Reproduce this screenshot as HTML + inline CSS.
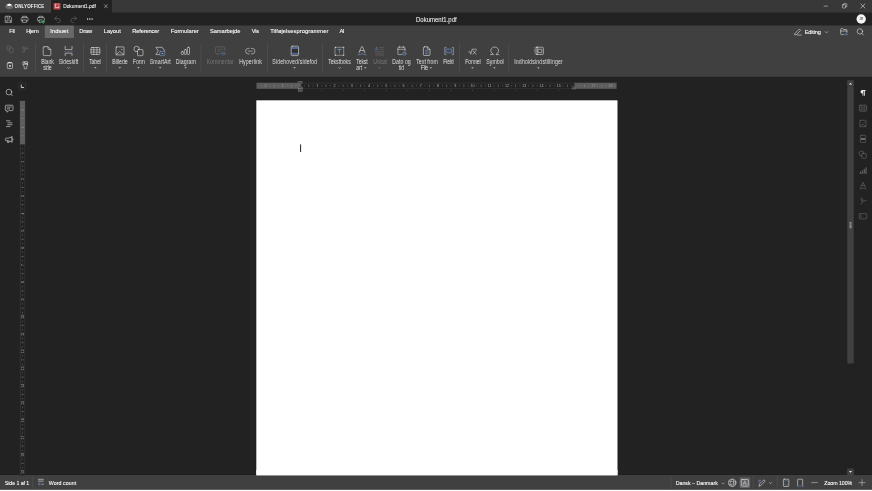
<!DOCTYPE html>
<html><head><meta charset="utf-8"><title>Dokument1.pdf - ONLYOFFICE</title>
<style>
html,body{margin:0;padding:0;width:872px;height:491px;overflow:hidden;background:#222222;}
#w{position:absolute;left:0;top:0;width:8720px;height:4910px;transform:scale(0.1);transform-origin:0 0;overflow:hidden;background:#222222;font-family:"Liberation Sans",sans-serif;}
#w div{position:absolute;}
#w .t{position:absolute;line-height:1;white-space:nowrap;transform-origin:0 84.65%;}
#w svg{position:absolute;left:0;top:0;}
#tx{left:0;top:0;width:8720px;height:4910px;filter:blur(0.3px);}
</style></head><body>
<div id="w">
<div style="left:0px;top:0px;width:8720px;height:127.5px;background:#383838;"></div>
<div style="left:0px;top:0px;width:511px;height:127.5px;background:#414141;"></div>
<div style="left:511px;top:0px;width:608px;height:127.5px;background:#222222;"></div>
<div style="left:0px;top:127.5px;width:8720px;height:127px;background:#222222;"></div>
<div style="left:0px;top:254.5px;width:8720px;height:509px;background:#404040;"></div>
<div style="left:0px;top:758.5px;width:8720px;height:5px;background:#4c4c4c;"></div>
<div style="left:448px;top:255px;width:290.5px;height:126px;background:#686868;border-radius:11px 11px 4px 4px;"></div>
<div style="left:2558.5px;top:998.5px;width:3621px;height:3755.5px;background:#161616;"></div>
<div style="left:2563px;top:1003px;width:3612px;height:3751px;background:#ffffff;"></div>
<div style="left:0px;top:4745.5px;width:8720px;height:4.5px;background:#1c1c1c;"></div>
<div style="left:0px;top:4750px;width:8720px;height:147.5px;background:#404040;"></div>
<div style="left:2563px;top:4700px;width:3612px;height:54.5px;background:#ffffff;"></div>
<div style="left:2563px;top:4759px;width:3612px;height:6px;background:#3a3a3a;"></div>
<div style="left:0px;top:4893px;width:8720px;height:4.5px;background:#343434;"></div>
<div style="left:0px;top:4897.5px;width:8720px;height:12.5px;background:#ffffff;"></div>
<div style="left:3001px;top:1444px;width:10px;height:76px;background:#222;"></div>
<div style="left:2565px;top:828px;width:3601px;height:60px;background:#222;"></div>
<div style="left:2565px;top:828px;width:3601px;height:4.5px;background:#414141;"></div>
<div style="left:2565px;top:883.5px;width:3601px;height:4.5px;background:#414141;"></div>
<div style="left:2565px;top:828px;width:436px;height:60px;background:#5c5c5c;"></div>
<div style="left:5744px;top:828px;width:422px;height:60px;background:#5c5c5c;"></div>
<div style="left:199px;top:1008px;width:52px;height:3746px;background:#222;"></div>
<div style="left:199px;top:1008px;width:4.5px;height:3746px;background:#454545;"></div>
<div style="left:246.5px;top:1008px;width:4.5px;height:3746px;background:#454545;"></div>
<div style="left:199px;top:1008px;width:52px;height:436px;background:#5c5c5c;"></div>
<svg viewBox="0 0 872 491" width="8720" height="4910" fill="none" stroke="#f0f0f0" stroke-width="0.55" stroke-linecap="round" stroke-linejoin="round">
<!-- ===== title bar ===== -->
<g id="logo" stroke="none">
  <path d="M9.3 3.6 L12.6 4.9 L9.3 6.2 L6 4.9 Z" fill="#ffffff"/>
  <path d="M6 6.2 L9.3 7.5 L12.6 6.2" fill="none" stroke="#c8c8c8" stroke-width="0.55"/>
  <path d="M6 7.6 L9.3 8.9 L12.6 7.6" fill="none" stroke="#9c9c9c" stroke-width="0.55"/>
</g>
<g id="tabicon" stroke="none">
  <rect x="53.6" y="2.9" width="6.9" height="6.7" rx="0.5" fill="#b84545"/>
  <path d="M55.3 4.3 h1.2 M58 4.3 h0.9 M55.3 4.3 v3.3 h3.6 v-1.6" stroke="#ffffff" stroke-width="0.6" fill="none" stroke-linecap="butt"/>
</g>
<path d="M104.3 4.6 L107.4 7.9 M107.4 4.6 L104.3 7.9" stroke="#d8d8d8" stroke-width="0.5"/>
<!-- window controls -->
<path d="M823.7 6.1 H827.9" stroke-width="0.5" stroke="#ececec" stroke-linecap="butt"/>
<path d="M842.9 4.8 h2.2 a0.5 0.5 0 0 1 0.5 0.5 v2.2 a0.5 0.5 0 0 1 -0.5 0.5 h-2.2 a0.5 0.5 0 0 1 -0.5 -0.5 v-2.2 a0.5 0.5 0 0 1 0.5 -0.5 Z M843.5 4.7 v-0.5 a0.6 0.6 0 0 1 0.6 -0.6 h2.1 a0.6 0.6 0 0 1 0.6 0.6 v2.1 a0.6 0.6 0 0 1 -0.6 0.6 h-0.5" stroke-width="0.5" stroke="#ececec"/>
<path d="M860.8 3.95 L864.9 8 M864.9 3.95 L860.8 8" stroke-width="0.55" stroke="#f4f4f4"/>
<!-- ===== quick access bar ===== -->
<g id="save" stroke="#ececec" stroke-width="0.5">
  <path d="M5.6 16.2 h4.5 l1.5 1.5 v4.6 h-6 Z"/>
  <path d="M7.1 16.3 v1.9 h2.5 v-1.9"/>
  <path d="M6.9 22.2 v-2.2 h3.5 v2.2"/>
</g>
<g id="print" stroke="#ececec" stroke-width="0.5">
  <path d="M22.7 17.6 v-1.3 h3.9 v1.3"/>
  <path d="M22.6 20.9 h-0.6 a0.8 0.8 0 0 1 -0.8 -0.8 v-1.7 a0.8 0.8 0 0 1 0.8 -0.8 h5.3 a0.8 0.8 0 0 1 0.8 0.8 v1.7 a0.8 0.8 0 0 1 -0.8 0.8 h-0.6"/>
  <path d="M22.7 19.9 h3.9 v2.4 h-3.9 Z"/>
</g>
<g id="print2" stroke="#ececec" stroke-width="0.5">
  <path d="M39 17.6 v-1.3 h3.9 v1.3"/>
  <path d="M38.9 20.9 h-0.6 a0.8 0.8 0 0 1 -0.8 -0.8 v-1.7 a0.8 0.8 0 0 1 0.8 -0.8 h5.3 a0.8 0.8 0 0 1 0.8 0.8 v1.2"/>
  <path d="M41.4 22.3 h-2.4 v-2.4 h3"/>
  <path d="M43.3 20.1 L45 21.3 L43.3 23.7 L41.6 21.3 Z" fill="#3b8c5a" stroke="#3b8c5a" stroke-width="0.5"/>
  <path d="M42.7 21.6 l0.5 0.5 l0.8 -1" stroke="#a8d8b8" stroke-width="0.35"/>
</g>
<g id="undo" stroke="#6e6e6e">
  <path d="M56.6 16.6 L54.6 18.4 L56.6 20.2"/>
  <path d="M54.8 18.4 h3.4 a2.1 2.1 0 0 1 0 4.2 h-0.6"/>
</g>
<g id="redo" stroke="#6e6e6e">
  <path d="M74.6 16.6 L76.6 18.4 L74.6 20.2"/>
  <path d="M76.4 18.4 h-3.4 a2.1 2.1 0 0 0 0 4.2 h0.6"/>
</g>
<g id="more" stroke="none" fill="#e0e0e0">
  <rect x="87.05" y="18.3" width="1.1" height="1.5"/><rect x="89.3" y="18.3" width="1.1" height="1.5"/><rect x="91.55" y="18.3" width="1.1" height="1.5"/>
</g>
<g id="avatar" stroke="none">
  <circle cx="861.2" cy="18.95" r="4.7" fill="#f4f4f4"/>
  <text x="861.25" y="20.05" font-size="3.1" font-weight="bold" text-anchor="middle" fill="#6a6a78" font-family="Liberation Sans, sans-serif">JR</text>
</g>
<!-- ===== tabs bar right ===== -->
<g id="editing">
  <path d="M795.2 33.2 L799.3 29.1 L800.6 30.4 L796.5 34.5 L794.9 34.8 Z"/>
  <path d="M797.4 35 H801.2"/>
  <path d="M825.2 31.6 L826.5 32.9 L827.8 31.6" stroke-width="0.45"/>
</g>
<g id="openloc">
  <path d="M843.4 34.6 h-1.9 a0.8 0.8 0 0 1 -0.8 -0.8 v-4.4 a0.8 0.8 0 0 1 0.8 -0.8 h1.3 l0.8 0.9 h2.5 a0.8 0.8 0 0 1 0.8 0.8 v2.1"/>
  <path d="M840.8 31 h6.1"/>
  <path d="M844.3 34.3 h3 M846.3 33.2 l1.1 1.1 l-1.1 1.1" stroke="#6b9be0" stroke-width="0.5"/>
</g>
<g id="search">
  <circle cx="859.9" cy="31.4" r="2.7"/>
  <path d="M861.9 33.4 L863.5 35"/>
</g>
<!-- ===== toolbar ===== -->
<g id="seps" stroke="#585858" stroke-width="0.5" stroke-linecap="butt">
  <path d="M35.5 44 V70.8 M83.5 44 V70.8 M106.5 44 V70.8 M200.9 44 V70.8 M267.5 44 V70.8 M322.5 44 V70.8 M459.5 44 V70.8 M508.6 44 V70.8"/>
</g>
<g id="copy" stroke="#6c6c6c">
  <path d="M8.9 49.9 h-2 v-3.8 h3.9 v1.7"/>
  <rect x="9.3" y="48.1" width="3.8" height="4.3" rx="0.5"/>
</g>
<g id="cut" stroke="#6c6c6c">
  <path d="M27.6 46.4 L24.3 50.3 M25.2 49.2 L28.6 48.6"/>
  <circle cx="23.7" cy="51.2" r="0.95"/><circle cx="23.3" cy="47.6" r="0.95"/>
  <path d="M24 48.3 L25.3 49.3"/>
</g>
<g id="paste">
  <rect x="7.3" y="62.9" width="5.2" height="5.6" rx="0.7"/>
  <path d="M8.5 62.6 h2.8" stroke-width="0.9"/>
  <rect x="9.1" y="65.1" width="1.7" height="1.6" fill="#e6e6e6" stroke="none"/>
</g>
<g id="painter">
  <path d="M23.3 61.8 h4.3 v3.6 l-0.9 1.2 v1.6 a0.6 0.6 0 0 1 -0.6 0.6 h-1.3 a0.6 0.6 0 0 1 -0.6 -0.6 v-1.6 l-0.9 -1.2 Z"/>
  <path d="M23.3 64.3 h4.3"/>
  <path d="M24.6 62.2 v1.2 h2.5" stroke-width="0.7"/>
</g>
<g id="blank">
  <path d="M44.2 46.7 h3.8 l2.8 2.8 v5.1 a1 1 0 0 1 -1 1 h-5.6 a1 1 0 0 1 -1 -1 v-6.9 a1 1 0 0 1 1 -1 Z"/>
  <path d="M48 46.9 v1.6 a1 1 0 0 0 1 1 h1.6"/>
</g>
<g id="pagebreak">
  <path d="M65.2 46.3 V49.6 H72 V46.3"/>
  <path d="M65.2 55.5 V53.2 H72 V55.5"/>
  <path d="M64.2 51.5 H73" stroke="#7ea6e0" stroke-dasharray="0.5 0.9" stroke-linecap="butt" stroke-width="0.6"/>
</g>
<g id="table">
  <rect x="91" y="47.5" width="8.8" height="7" rx="0.9"/>
  <path d="M93.8 47.5 V54.5 M96.9 47.5 V54.5 M91 49.8 H99.8 M91 52.1 H99.8" stroke-width="0.5"/>
</g>
<g id="image">
  <rect x="116" y="46.9" width="8" height="8" rx="0.4"/>
  <path d="M116.3 54.6 L119.7 51.5 L123.7 54.6"/>
  <circle cx="121.9" cy="49.3" r="0.55" fill="#e6e6e6" stroke="none"/>
</g>
<g id="shape">
  <path d="M137.2 51.7 a2.75 2.75 0 1 1 2.2 -2.4"/>
  <rect x="137.5" y="49.6" width="5.5" height="6.1" rx="0.9"/>
</g>
<g id="smartart">
  <path d="M159.4 54.6 H155.9 L158.3 50.9 L155.9 47.3 H162.2 L164.7 51"/>
  <rect x="159.7" y="51.4" width="5.1" height="4.2" rx="0.9" stroke="#7ea2dc"/>
  <rect x="161.4" y="53" width="2" height="1" fill="#7ea2dc" stroke="none"/>
</g>
<g id="chart">
  <rect x="181.3" y="51.5" width="2.1" height="3.1" rx="1"/>
  <rect x="184.3" y="49.5" width="2.1" height="5.1" rx="1"/>
  <rect x="187.3" y="47.3" width="2.2" height="7.3" rx="1"/>
</g>
<g id="comment" stroke="#6c6c6c">
  <path d="M220.6 53.6 h-1.6 l-1.6 1.5 v-1.5 h-1 a0.9 0.9 0 0 1 -0.9 -0.9 v-4.9 a0.9 0.9 0 0 1 0.9 -0.9 h7.4 a0.9 0.9 0 0 1 0.9 0.9 v2.7"/>
  <path d="M218 49.3 H222.6 M218 51.2 H220.6"/>
  <circle cx="223.3" cy="53.5" r="1.7" stroke="#56779f" stroke-width="0.5"/>
  <path d="M222.5 53.5 h1.6 M223.3 52.7 v1.6" stroke="#56779f" stroke-width="0.4"/>
</g>
<g id="hyperlink" stroke-width="0.5">
  <path d="M249.2 48.4 h-0.9 a2.75 2.75 0 0 0 0 5.5 h0.9"/>
  <path d="M251.3 48.4 h0.9 a2.75 2.75 0 0 1 0 5.5 h-0.9"/>
  <path d="M248.2 51.15 H252.3"/>
</g>
<g id="headerfooter">
  <rect x="291.7" y="47" width="6.3" height="2" fill="#50658f" stroke="none"/>
  <rect x="291.7" y="52.8" width="6.3" height="2" fill="#50658f" stroke="none"/>
  <rect x="291.7" y="49.3" width="6.3" height="3.2" fill="#2e2e2e" stroke="none"/>
  <rect x="291.2" y="46.2" width="7.3" height="9.4" rx="1"/>
</g>
<g id="textbox">
  <rect x="335.4" y="47.3" width="8.3" height="8" stroke-width="0.4"/>
  <path d="M335.4 47.3 h0.01 M343.7 47.3 h0.01 M335.4 55.3 h0.01 M343.7 55.3 h0.01" stroke-width="0.9" stroke-linecap="square"/>
  <path d="M337.3 49.4 H341.6 M339.45 49.4 V53" stroke="#86a8e6" stroke-width="0.6" stroke-linecap="butt"/>
</g>
<g id="textart">
  <path d="M359 52.8 L361.5 46.7 H362.5 L365 52.8 M360 50.6 H364"/>
  <path d="M358 54.9 Q362 52.3 366 54.9" stroke="#7ea2dc"/>
</g>
<g id="dropcap" stroke="#6c6c6c" stroke-linecap="butt">
  <path d="M375.3 50.4 L376.6 46.9 L377.9 50.4 M375.8 49.2 h1.6" stroke="#5d7fae" stroke-width="0.5"/>
  <path d="M379.2 47.5 H384 M379.2 49.3 H384 M375.2 51.4 H384 M375.2 53.2 H384 M375.2 55 H384" stroke-width="0.5"/>
</g>
<g id="datetime" stroke-width="0.5">
  <path d="M401.9 54.6 h-3.2 a0.8 0.8 0 0 1 -0.8 -0.8 v-5.8 a0.8 0.8 0 0 1 0.8 -0.8 h5.5 a0.8 0.8 0 0 1 0.8 0.8 v3"/>
  <path d="M397.9 49.3 H405 M399.5 46.3 v1 M403.4 46.3 v1"/>
  <circle cx="404.3" cy="53.6" r="1.7" stroke="#7ea2dc"/>
  <path d="M404.3 52.7 v1 h-0.7" stroke="#7ea2dc" stroke-width="0.4"/>
</g>
<g id="textfromfile">
  <path d="M424.4 46.8 h3 l2.6 2.6 v5.1 a1 1 0 0 1 -1 1 h-4.6 a1 1 0 0 1 -1 -1 v-6.7 a1 1 0 0 1 1 -1 Z"/>
  <path d="M427.4 47 v1.4 a1 1 0 0 0 1 1 h1.4"/>
  <path d="M425 50.3 H428.5 M425 52 H428.5 M425 53.7 H428.5" stroke="#7ea2dc" stroke-linecap="butt"/>
</g>
<g id="field" stroke="#c2cde6" stroke-width="0.5">
  <path d="M446 47.4 h-1.2 v7.3 h1.2 M452.2 47.4 h1.2 v7.3 h-1.2"/>
  <rect x="446.5" y="49" width="5.2" height="3.8" stroke="#7f9acb" fill="#3d475c" stroke-width="0.55"/>
</g>
<g id="equation">
  <path d="M468.8 51.8 L469.7 51.4 L470.8 54.2 L472.1 49.2 H476.4" stroke-width="0.5"/>
  <path d="M473 50.6 L476 54.2 M476 50.6 L473 54.2" stroke-width="0.5"/>
</g>
<g id="symbol">
  <path d="M490.6 54.6 H493.3 V54 A3.9 3.6 0 1 1 496.1 54 V54.6 H498.8" stroke-width="0.55"/>
</g>
<g id="contentcontrol">
  <rect x="536" y="47.2" width="7.4" height="7.3" rx="1"/>
  <path d="M534.5 47.6 v6.5" stroke-dasharray="0.4 0.9" stroke-width="0.7" stroke-linecap="butt"/>
  <rect x="538.4" y="49.2" width="3.4" height="3.4" stroke-width="0.5"/>
  <path d="M536 47.2 h1.3 v7.3 h-1.3" stroke-width="0.45"/>
</g>
<!-- toolbar carets -->
<g id="carets">
<path d="M67.40 67.30 L68.55 68.50 L69.70 67.30" stroke="#dadada" stroke-width="0.45" fill="none"/>
<path d="M94.45 67.35 H96.35 L95.40 68.35 Z" fill="#dadada" stroke="#dadada" stroke-width="0.15"/>
<path d="M118.95 67.35 H120.85 L119.90 68.35 Z" fill="#dadada" stroke="#dadada" stroke-width="0.15"/>
<path d="M137.55 67.35 H139.45 L138.50 68.35 Z" fill="#dadada" stroke="#dadada" stroke-width="0.15"/>
<path d="M159.25 67.35 H161.15 L160.20 68.35 Z" fill="#dadada" stroke="#dadada" stroke-width="0.15"/>
<path d="M184.75 67.35 H186.65 L185.70 68.35 Z" fill="#dadada" stroke="#dadada" stroke-width="0.15"/>
<path d="M293.65 67.35 H295.55 L294.60 68.35 Z" fill="#dadada" stroke="#dadada" stroke-width="0.15"/>
<path d="M338.55 67.40 L339.60 68.50 L340.65 67.40" stroke="#dadada" stroke-width="0.45" fill="none"/>
<path d="M364.35 67.50 H366.25 L365.30 68.50 Z" fill="#dadada" stroke="#dadada" stroke-width="0.15"/>
<path d="M378.65 67.50 H380.55 L379.60 68.50 Z" fill="#7a7a7a" stroke="#7a7a7a" stroke-width="0.15"/>
<path d="M429.95 67.40 H431.85 L430.90 68.40 Z" fill="#dadada" stroke="#dadada" stroke-width="0.15"/>
<path d="M471.55 67.55 H473.45 L472.50 68.55 Z" fill="#dadada" stroke="#dadada" stroke-width="0.15"/>
<path d="M493.55 67.55 H495.45 L494.50 68.55 Z" fill="#dadada" stroke="#dadada" stroke-width="0.15"/>
<path d="M537.55 67.55 H539.45 L538.50 68.55 Z" fill="#dadada" stroke="#dadada" stroke-width="0.15"/>
</g>

<!-- ===== left sidebar ===== -->
<g id="lsearch"><circle cx="8.9" cy="92.1" r="2.85"/><path d="M11 94.3 L12.4 95.8"/></g>
<g id="lcomment">
  <path d="M8.9 110.6 L7 112.2 V110.6 H6.1 a0.8 0.8 0 0 1 -0.8 -0.8 V106 a0.8 0.8 0 0 1 0.8 -0.8 H12.2 a0.8 0.8 0 0 1 0.8 0.8 V109.8 a0.8 0.8 0 0 1 -0.8 0.8 Z"/>
  <path d="M7.2 107.1 H11.2 M7.2 108.8 H9.6"/>
</g>
<g id="lnav" stroke-linecap="butt"><path d="M6 120.8 H10.4 M7.4 122.8 H12.4 M7.4 124.7 H12.4 M6 126.6 H10.4"/></g>
<g id="lmega">
  <path d="M11.9 136.5 V142.2 M11.9 137 L7.7 138.2 H6.2 a0.8 0.8 0 0 0 -0.8 0.8 V139.9 a0.8 0.8 0 0 0 0.8 0.8 H7.7 L11.9 141.8"/>
  <path d="M7.4 140.8 V142.4 H9 V141.2"/>
  <path d="M12.2 138.6 a0.9 0.9 0 0 1 0 1.8"/>
</g>
<!-- ===== right sidebar ===== -->
<g id="rpara" stroke="none" fill="#ececec">
  <path d="M862.3 90.1 H865.6 V90.9 H865 V95.7 H864.2 V90.9 H863.4 V95.7 H862.6 V93.4 H862.2 A1.65 1.65 0 0 1 862.2 90.1 Z"/>
</g>
<g id="rdim" stroke="#707070">
  <rect x="859.4" y="105.2" width="7.2" height="6" rx="0.6"/>
  <path d="M861.8 105.2 V111.2 M864.2 105.2 V111.2 M859.4 107.2 H866.6 M859.4 109.2 H866.6" stroke-width="0.4"/>
  <rect x="859.9" y="120.3" width="6.2" height="6.4" rx="0.4"/>
  <path d="M860.2 126.4 L862.7 124 L865.8 126.4" /><circle cx="864.3" cy="122.4" r="0.4" fill="#707070" stroke="none"/>
  <rect x="860.3" y="135.3" width="5.4" height="7.1" rx="0.8"/>
  <rect x="860.9" y="138" width="4.2" height="1.9" fill="#707070" stroke="none"/>
  <path d="M861.7 156 a2.5 2.5 0 1 1 2.3 -2.6"/>
  <rect x="861.8" y="153.6" width="4.5" height="4.6" rx="0.7"/>
  <path d="M859.8 173.3 H866.6" />
  <path d="M860.5 173 V171.7 M862.4 173 V170.4 M864.3 173 V168.9 M866.1 173 V167.3" stroke-width="0.95" stroke-linecap="butt"/>
  <path d="M860.7 187.2 L863 182.2 L865.3 187.2 M861.6 185.4 H864.4"/>
  <path d="M860 188.8 Q863 187.2 866 188.8"/>
  <path d="M861.2 204.2 C862.6 201.5 863.4 199.2 862.2 198.3 C861 197.6 860.2 199.4 861.4 200.6 C862.6 201.6 864.6 201.2 866.4 200.2"/>
  <rect x="859.3" y="213.7" width="7.5" height="5.2" rx="0.7"/>
  <path d="M861 215.2 V217.4" />
</g>

<!-- ===== status bar ===== -->
<g id="sbseps" stroke="#5a5a5a" stroke-width="0.45" stroke-linecap="butt">
  <path d="M32.8 476 V489.4 M671 476 V489.4 M753.4 476 V489.4 M777.2 476 V489.4"/>
</g>
<g id="wordcount" stroke-linecap="butt">
  <path d="M38 479.3 H43.7 M38 481.1 H43.7 M41.4 484.2 H43.7"/>
  <path d="M38 483.1 H40.6 M38.9 483.1 V485.6 M39.9 483.1 V485.6" stroke="#7ea2dc" stroke-width="0.4"/>
</g>
<path d="M722 483 L723.15 484.1 L724.3 483" stroke-width="0.45"/>
<g id="globe">
  <circle cx="732.2" cy="482.8" r="3.7"/>
  <ellipse cx="732.2" cy="482.8" rx="1.6" ry="3.7" stroke-width="0.4"/>
  <path d="M728.7 481.4 H735.7 M728.7 484.2 H735.7" stroke-width="0.4"/>
</g>
<g id="spell">
  <rect x="739.6" y="477.6" width="10.5" height="10.3" rx="1.2" fill="#636363" stroke="none"/>
  <rect x="741.3" y="479.5" width="7" height="6.6" rx="0.9"/>
  <path d="M743.1 484.6 L744.7 480.8 L746.3 484.6 M743.7 483.4 H745.7" stroke-width="0.45"/>
  <path d="M746 485.6 L747.1 486.6 L748.9 484.4" stroke="#7ea2dc" stroke-width="0.5"/>
</g>
<g id="track">
  <path d="M758.2 480.3 H761 M758.2 481.9 H760.2" stroke="#7ea2dc" stroke-linecap="butt"/>
  <path d="M759 486 L759.6 483.9 L763.2 480.3 a0.95 0.95 0 0 1 1.4 1.4 L761 485.3 Z"/>
  <path d="M769.4 482.5 L770.6 483.7 L771.8 482.5" stroke-width="0.45"/>
</g>
<g id="fitpage">
  <rect x="783.4" y="479.2" width="5.4" height="7.3" rx="0.8"/>
  <path d="M784.6 481.3 L786.1 480.3 L787.6 481.3 M784.6 484.4 L786.1 485.4 L787.6 484.4" stroke="#7ea2dc" stroke-width="0.4"/>
</g>
<g id="fitwidth">
  <path d="M797.6 484.6 V480 a0.8 0.8 0 0 1 0.8 -0.8 H801.8 a0.8 0.8 0 0 1 0.8 0.8 V484.6"/>
  <path d="M797 485.9 H803.4 M798 485 L797 485.9 L798 486.8 M802.4 485 L803.4 485.9 L802.4 486.8" stroke="#7ea2dc" stroke-width="0.4"/>
</g>
<path d="M811.6 482.6 H817.4" stroke-width="0.45"/>
<path d="M859 482.7 H865 M862 479.7 V485.7" stroke-width="0.45"/>
<path d="M261.31 85.35 V86.25" stroke="#9a9a9a" stroke-width="0.45" stroke-linecap="butt"/>
<text x="265.62" y="87.15" font-size="3.7" text-anchor="middle" fill="#9a9a9a" stroke="none" font-family="Liberation Sans, sans-serif">2</text>
<path d="M269.93 85.35 V86.25" stroke="#9a9a9a" stroke-width="0.45" stroke-linecap="butt"/>
<path d="M274.24 84.60 V87.00" stroke="#9a9a9a" stroke-width="0.4" stroke-linecap="butt"/>
<path d="M278.55 85.35 V86.25" stroke="#9a9a9a" stroke-width="0.45" stroke-linecap="butt"/>
<text x="282.86" y="87.15" font-size="3.7" text-anchor="middle" fill="#9a9a9a" stroke="none" font-family="Liberation Sans, sans-serif">1</text>
<path d="M287.17 85.35 V86.25" stroke="#9a9a9a" stroke-width="0.45" stroke-linecap="butt"/>
<path d="M291.48 84.60 V87.00" stroke="#9a9a9a" stroke-width="0.4" stroke-linecap="butt"/>
<path d="M295.79 85.35 V86.25" stroke="#9a9a9a" stroke-width="0.45" stroke-linecap="butt"/>
<path d="M304.41 85.35 V86.25" stroke="#a8a8a8" stroke-width="0.45" stroke-linecap="butt"/>
<path d="M308.72 84.60 V87.00" stroke="#a8a8a8" stroke-width="0.4" stroke-linecap="butt"/>
<path d="M313.03 85.35 V86.25" stroke="#a8a8a8" stroke-width="0.45" stroke-linecap="butt"/>
<text x="317.34" y="87.15" font-size="3.7" text-anchor="middle" fill="#a8a8a8" stroke="none" font-family="Liberation Sans, sans-serif">1</text>
<path d="M321.65 85.35 V86.25" stroke="#a8a8a8" stroke-width="0.45" stroke-linecap="butt"/>
<path d="M325.96 84.60 V87.00" stroke="#a8a8a8" stroke-width="0.4" stroke-linecap="butt"/>
<path d="M330.27 85.35 V86.25" stroke="#a8a8a8" stroke-width="0.45" stroke-linecap="butt"/>
<text x="334.58" y="87.15" font-size="3.7" text-anchor="middle" fill="#a8a8a8" stroke="none" font-family="Liberation Sans, sans-serif">2</text>
<path d="M338.89 85.35 V86.25" stroke="#a8a8a8" stroke-width="0.45" stroke-linecap="butt"/>
<path d="M343.20 84.60 V87.00" stroke="#a8a8a8" stroke-width="0.4" stroke-linecap="butt"/>
<path d="M347.51 85.35 V86.25" stroke="#a8a8a8" stroke-width="0.45" stroke-linecap="butt"/>
<text x="351.82" y="87.15" font-size="3.7" text-anchor="middle" fill="#a8a8a8" stroke="none" font-family="Liberation Sans, sans-serif">3</text>
<path d="M356.13 85.35 V86.25" stroke="#a8a8a8" stroke-width="0.45" stroke-linecap="butt"/>
<path d="M360.44 84.60 V87.00" stroke="#a8a8a8" stroke-width="0.4" stroke-linecap="butt"/>
<path d="M364.75 85.35 V86.25" stroke="#a8a8a8" stroke-width="0.45" stroke-linecap="butt"/>
<text x="369.06" y="87.15" font-size="3.7" text-anchor="middle" fill="#a8a8a8" stroke="none" font-family="Liberation Sans, sans-serif">4</text>
<path d="M373.37 85.35 V86.25" stroke="#a8a8a8" stroke-width="0.45" stroke-linecap="butt"/>
<path d="M377.68 84.60 V87.00" stroke="#a8a8a8" stroke-width="0.4" stroke-linecap="butt"/>
<path d="M381.99 85.35 V86.25" stroke="#a8a8a8" stroke-width="0.45" stroke-linecap="butt"/>
<text x="386.30" y="87.15" font-size="3.7" text-anchor="middle" fill="#a8a8a8" stroke="none" font-family="Liberation Sans, sans-serif">5</text>
<path d="M390.61 85.35 V86.25" stroke="#a8a8a8" stroke-width="0.45" stroke-linecap="butt"/>
<path d="M394.92 84.60 V87.00" stroke="#a8a8a8" stroke-width="0.4" stroke-linecap="butt"/>
<path d="M399.23 85.35 V86.25" stroke="#a8a8a8" stroke-width="0.45" stroke-linecap="butt"/>
<text x="403.54" y="87.15" font-size="3.7" text-anchor="middle" fill="#a8a8a8" stroke="none" font-family="Liberation Sans, sans-serif">6</text>
<path d="M407.85 85.35 V86.25" stroke="#a8a8a8" stroke-width="0.45" stroke-linecap="butt"/>
<path d="M412.16 84.60 V87.00" stroke="#a8a8a8" stroke-width="0.4" stroke-linecap="butt"/>
<path d="M416.47 85.35 V86.25" stroke="#a8a8a8" stroke-width="0.45" stroke-linecap="butt"/>
<text x="420.78" y="87.15" font-size="3.7" text-anchor="middle" fill="#a8a8a8" stroke="none" font-family="Liberation Sans, sans-serif">7</text>
<path d="M425.09 85.35 V86.25" stroke="#a8a8a8" stroke-width="0.45" stroke-linecap="butt"/>
<path d="M429.40 84.60 V87.00" stroke="#a8a8a8" stroke-width="0.4" stroke-linecap="butt"/>
<path d="M433.71 85.35 V86.25" stroke="#a8a8a8" stroke-width="0.45" stroke-linecap="butt"/>
<text x="438.02" y="87.15" font-size="3.7" text-anchor="middle" fill="#a8a8a8" stroke="none" font-family="Liberation Sans, sans-serif">8</text>
<path d="M442.33 85.35 V86.25" stroke="#a8a8a8" stroke-width="0.45" stroke-linecap="butt"/>
<path d="M446.64 84.60 V87.00" stroke="#a8a8a8" stroke-width="0.4" stroke-linecap="butt"/>
<path d="M450.95 85.35 V86.25" stroke="#a8a8a8" stroke-width="0.45" stroke-linecap="butt"/>
<text x="455.26" y="87.15" font-size="3.7" text-anchor="middle" fill="#a8a8a8" stroke="none" font-family="Liberation Sans, sans-serif">9</text>
<path d="M459.57 85.35 V86.25" stroke="#a8a8a8" stroke-width="0.45" stroke-linecap="butt"/>
<path d="M463.88 84.60 V87.00" stroke="#a8a8a8" stroke-width="0.4" stroke-linecap="butt"/>
<path d="M468.19 85.35 V86.25" stroke="#a8a8a8" stroke-width="0.45" stroke-linecap="butt"/>
<text x="472.50" y="87.15" font-size="3.7" text-anchor="middle" fill="#a8a8a8" stroke="none" font-family="Liberation Sans, sans-serif">10</text>
<path d="M476.81 85.35 V86.25" stroke="#a8a8a8" stroke-width="0.45" stroke-linecap="butt"/>
<path d="M481.12 84.60 V87.00" stroke="#a8a8a8" stroke-width="0.4" stroke-linecap="butt"/>
<path d="M485.43 85.35 V86.25" stroke="#a8a8a8" stroke-width="0.45" stroke-linecap="butt"/>
<text x="489.74" y="87.15" font-size="3.7" text-anchor="middle" fill="#a8a8a8" stroke="none" font-family="Liberation Sans, sans-serif">11</text>
<path d="M494.05 85.35 V86.25" stroke="#a8a8a8" stroke-width="0.45" stroke-linecap="butt"/>
<path d="M498.36 84.60 V87.00" stroke="#a8a8a8" stroke-width="0.4" stroke-linecap="butt"/>
<path d="M502.67 85.35 V86.25" stroke="#a8a8a8" stroke-width="0.45" stroke-linecap="butt"/>
<text x="506.98" y="87.15" font-size="3.7" text-anchor="middle" fill="#a8a8a8" stroke="none" font-family="Liberation Sans, sans-serif">12</text>
<path d="M511.29 85.35 V86.25" stroke="#a8a8a8" stroke-width="0.45" stroke-linecap="butt"/>
<path d="M515.60 84.60 V87.00" stroke="#a8a8a8" stroke-width="0.4" stroke-linecap="butt"/>
<path d="M519.91 85.35 V86.25" stroke="#a8a8a8" stroke-width="0.45" stroke-linecap="butt"/>
<text x="524.22" y="87.15" font-size="3.7" text-anchor="middle" fill="#a8a8a8" stroke="none" font-family="Liberation Sans, sans-serif">13</text>
<path d="M528.53 85.35 V86.25" stroke="#a8a8a8" stroke-width="0.45" stroke-linecap="butt"/>
<path d="M532.84 84.60 V87.00" stroke="#a8a8a8" stroke-width="0.4" stroke-linecap="butt"/>
<path d="M537.15 85.35 V86.25" stroke="#a8a8a8" stroke-width="0.45" stroke-linecap="butt"/>
<text x="541.46" y="87.15" font-size="3.7" text-anchor="middle" fill="#a8a8a8" stroke="none" font-family="Liberation Sans, sans-serif">14</text>
<path d="M545.77 85.35 V86.25" stroke="#a8a8a8" stroke-width="0.45" stroke-linecap="butt"/>
<path d="M550.08 84.60 V87.00" stroke="#a8a8a8" stroke-width="0.4" stroke-linecap="butt"/>
<path d="M554.39 85.35 V86.25" stroke="#a8a8a8" stroke-width="0.45" stroke-linecap="butt"/>
<text x="558.70" y="87.15" font-size="3.7" text-anchor="middle" fill="#a8a8a8" stroke="none" font-family="Liberation Sans, sans-serif">15</text>
<path d="M563.01 85.35 V86.25" stroke="#a8a8a8" stroke-width="0.45" stroke-linecap="butt"/>
<path d="M567.32 84.60 V87.00" stroke="#a8a8a8" stroke-width="0.4" stroke-linecap="butt"/>
<path d="M571.63 85.35 V86.25" stroke="#a8a8a8" stroke-width="0.45" stroke-linecap="butt"/>
<path d="M580.25 85.35 V86.25" stroke="#9a9a9a" stroke-width="0.45" stroke-linecap="butt"/>
<path d="M584.56 84.60 V87.00" stroke="#9a9a9a" stroke-width="0.4" stroke-linecap="butt"/>
<path d="M588.87 85.35 V86.25" stroke="#9a9a9a" stroke-width="0.45" stroke-linecap="butt"/>
<text x="593.18" y="87.15" font-size="3.7" text-anchor="middle" fill="#9a9a9a" stroke="none" font-family="Liberation Sans, sans-serif">17</text>
<path d="M597.49 85.35 V86.25" stroke="#9a9a9a" stroke-width="0.45" stroke-linecap="butt"/>
<path d="M601.80 84.60 V87.00" stroke="#9a9a9a" stroke-width="0.4" stroke-linecap="butt"/>
<path d="M606.11 85.35 V86.25" stroke="#9a9a9a" stroke-width="0.45" stroke-linecap="butt"/>
<text x="610.42" y="87.15" font-size="3.7" text-anchor="middle" fill="#9a9a9a" stroke="none" font-family="Liberation Sans, sans-serif">18</text>
<path d="M614.73 85.35 V86.25" stroke="#9a9a9a" stroke-width="0.45" stroke-linecap="butt"/>
<path d="M321.65 89.9 V90.9" stroke="#808080" stroke-width="0.45" stroke-linecap="butt"/>
<path d="M343.20 89.9 V90.9" stroke="#808080" stroke-width="0.45" stroke-linecap="butt"/>
<path d="M364.75 89.9 V90.9" stroke="#808080" stroke-width="0.45" stroke-linecap="butt"/>
<path d="M386.30 89.9 V90.9" stroke="#808080" stroke-width="0.45" stroke-linecap="butt"/>
<path d="M407.85 89.9 V90.9" stroke="#808080" stroke-width="0.45" stroke-linecap="butt"/>
<path d="M429.40 89.9 V90.9" stroke="#808080" stroke-width="0.45" stroke-linecap="butt"/>
<path d="M450.95 89.9 V90.9" stroke="#808080" stroke-width="0.45" stroke-linecap="butt"/>
<path d="M472.50 89.9 V90.9" stroke="#808080" stroke-width="0.45" stroke-linecap="butt"/>
<path d="M494.05 89.9 V90.9" stroke="#808080" stroke-width="0.45" stroke-linecap="butt"/>
<path d="M515.60 89.9 V90.9" stroke="#808080" stroke-width="0.45" stroke-linecap="butt"/>
<path d="M537.15 89.9 V90.9" stroke="#808080" stroke-width="0.45" stroke-linecap="butt"/>
<path d="M558.70 89.9 V90.9" stroke="#808080" stroke-width="0.45" stroke-linecap="butt"/>
<g stroke="#8c8c8c" stroke-width="0.4" fill="#4a4a4a" stroke-linejoin="miter"><path d="M298.3 81.5 H302.3 V82.6 L300.3 84.9 L298.3 82.6 Z"/><path d="M300.3 85.1 L302.3 87.3 V88.4 H298.3 V87.3 Z"/><rect x="298.3" y="88.6" width="4" height="2.7"/><path d="M573.9 86.6 L575.8 88.2 V89 H572 V88.2 Z"/></g>
<path d="M22.05 105.61 H22.95" stroke="#9a9a9a" stroke-width="0.45" stroke-linecap="butt"/>
<text transform="translate(23.80 109.92) rotate(-90)" font-size="3.7" text-anchor="middle" fill="#9a9a9a" stroke="none" font-family="Liberation Sans, sans-serif">2</text>
<path d="M22.05 114.23 H22.95" stroke="#9a9a9a" stroke-width="0.45" stroke-linecap="butt"/>
<path d="M21.30 118.54 H23.70" stroke="#9a9a9a" stroke-width="0.4" stroke-linecap="butt"/>
<path d="M22.05 122.85 H22.95" stroke="#9a9a9a" stroke-width="0.45" stroke-linecap="butt"/>
<text transform="translate(23.80 127.16) rotate(-90)" font-size="3.7" text-anchor="middle" fill="#9a9a9a" stroke="none" font-family="Liberation Sans, sans-serif">1</text>
<path d="M22.05 131.47 H22.95" stroke="#9a9a9a" stroke-width="0.45" stroke-linecap="butt"/>
<path d="M21.30 135.78 H23.70" stroke="#9a9a9a" stroke-width="0.4" stroke-linecap="butt"/>
<path d="M22.05 140.09 H22.95" stroke="#9a9a9a" stroke-width="0.45" stroke-linecap="butt"/>
<path d="M22.05 148.71 H22.95" stroke="#a8a8a8" stroke-width="0.45" stroke-linecap="butt"/>
<path d="M21.30 153.02 H23.70" stroke="#a8a8a8" stroke-width="0.4" stroke-linecap="butt"/>
<path d="M22.05 157.33 H22.95" stroke="#a8a8a8" stroke-width="0.45" stroke-linecap="butt"/>
<text transform="translate(23.80 161.64) rotate(-90)" font-size="3.7" text-anchor="middle" fill="#a8a8a8" stroke="none" font-family="Liberation Sans, sans-serif">1</text>
<path d="M22.05 165.95 H22.95" stroke="#a8a8a8" stroke-width="0.45" stroke-linecap="butt"/>
<path d="M21.30 170.26 H23.70" stroke="#a8a8a8" stroke-width="0.4" stroke-linecap="butt"/>
<path d="M22.05 174.57 H22.95" stroke="#a8a8a8" stroke-width="0.45" stroke-linecap="butt"/>
<text transform="translate(23.80 178.88) rotate(-90)" font-size="3.7" text-anchor="middle" fill="#a8a8a8" stroke="none" font-family="Liberation Sans, sans-serif">2</text>
<path d="M22.05 183.19 H22.95" stroke="#a8a8a8" stroke-width="0.45" stroke-linecap="butt"/>
<path d="M21.30 187.50 H23.70" stroke="#a8a8a8" stroke-width="0.4" stroke-linecap="butt"/>
<path d="M22.05 191.81 H22.95" stroke="#a8a8a8" stroke-width="0.45" stroke-linecap="butt"/>
<text transform="translate(23.80 196.12) rotate(-90)" font-size="3.7" text-anchor="middle" fill="#a8a8a8" stroke="none" font-family="Liberation Sans, sans-serif">3</text>
<path d="M22.05 200.43 H22.95" stroke="#a8a8a8" stroke-width="0.45" stroke-linecap="butt"/>
<path d="M21.30 204.74 H23.70" stroke="#a8a8a8" stroke-width="0.4" stroke-linecap="butt"/>
<path d="M22.05 209.05 H22.95" stroke="#a8a8a8" stroke-width="0.45" stroke-linecap="butt"/>
<text transform="translate(23.80 213.36) rotate(-90)" font-size="3.7" text-anchor="middle" fill="#a8a8a8" stroke="none" font-family="Liberation Sans, sans-serif">4</text>
<path d="M22.05 217.67 H22.95" stroke="#a8a8a8" stroke-width="0.45" stroke-linecap="butt"/>
<path d="M21.30 221.98 H23.70" stroke="#a8a8a8" stroke-width="0.4" stroke-linecap="butt"/>
<path d="M22.05 226.29 H22.95" stroke="#a8a8a8" stroke-width="0.45" stroke-linecap="butt"/>
<text transform="translate(23.80 230.60) rotate(-90)" font-size="3.7" text-anchor="middle" fill="#a8a8a8" stroke="none" font-family="Liberation Sans, sans-serif">5</text>
<path d="M22.05 234.91 H22.95" stroke="#a8a8a8" stroke-width="0.45" stroke-linecap="butt"/>
<path d="M21.30 239.22 H23.70" stroke="#a8a8a8" stroke-width="0.4" stroke-linecap="butt"/>
<path d="M22.05 243.53 H22.95" stroke="#a8a8a8" stroke-width="0.45" stroke-linecap="butt"/>
<text transform="translate(23.80 247.84) rotate(-90)" font-size="3.7" text-anchor="middle" fill="#a8a8a8" stroke="none" font-family="Liberation Sans, sans-serif">6</text>
<path d="M22.05 252.15 H22.95" stroke="#a8a8a8" stroke-width="0.45" stroke-linecap="butt"/>
<path d="M21.30 256.46 H23.70" stroke="#a8a8a8" stroke-width="0.4" stroke-linecap="butt"/>
<path d="M22.05 260.77 H22.95" stroke="#a8a8a8" stroke-width="0.45" stroke-linecap="butt"/>
<text transform="translate(23.80 265.08) rotate(-90)" font-size="3.7" text-anchor="middle" fill="#a8a8a8" stroke="none" font-family="Liberation Sans, sans-serif">7</text>
<path d="M22.05 269.39 H22.95" stroke="#a8a8a8" stroke-width="0.45" stroke-linecap="butt"/>
<path d="M21.30 273.70 H23.70" stroke="#a8a8a8" stroke-width="0.4" stroke-linecap="butt"/>
<path d="M22.05 278.01 H22.95" stroke="#a8a8a8" stroke-width="0.45" stroke-linecap="butt"/>
<text transform="translate(23.80 282.32) rotate(-90)" font-size="3.7" text-anchor="middle" fill="#a8a8a8" stroke="none" font-family="Liberation Sans, sans-serif">8</text>
<path d="M22.05 286.63 H22.95" stroke="#a8a8a8" stroke-width="0.45" stroke-linecap="butt"/>
<path d="M21.30 290.94 H23.70" stroke="#a8a8a8" stroke-width="0.4" stroke-linecap="butt"/>
<path d="M22.05 295.25 H22.95" stroke="#a8a8a8" stroke-width="0.45" stroke-linecap="butt"/>
<text transform="translate(23.80 299.56) rotate(-90)" font-size="3.7" text-anchor="middle" fill="#a8a8a8" stroke="none" font-family="Liberation Sans, sans-serif">9</text>
<path d="M22.05 303.87 H22.95" stroke="#a8a8a8" stroke-width="0.45" stroke-linecap="butt"/>
<path d="M21.30 308.18 H23.70" stroke="#a8a8a8" stroke-width="0.4" stroke-linecap="butt"/>
<path d="M22.05 312.49 H22.95" stroke="#a8a8a8" stroke-width="0.45" stroke-linecap="butt"/>
<text transform="translate(23.80 316.80) rotate(-90)" font-size="3.7" text-anchor="middle" fill="#a8a8a8" stroke="none" font-family="Liberation Sans, sans-serif">10</text>
<path d="M22.05 321.11 H22.95" stroke="#a8a8a8" stroke-width="0.45" stroke-linecap="butt"/>
<path d="M21.30 325.42 H23.70" stroke="#a8a8a8" stroke-width="0.4" stroke-linecap="butt"/>
<path d="M22.05 329.73 H22.95" stroke="#a8a8a8" stroke-width="0.45" stroke-linecap="butt"/>
<text transform="translate(23.80 334.04) rotate(-90)" font-size="3.7" text-anchor="middle" fill="#a8a8a8" stroke="none" font-family="Liberation Sans, sans-serif">11</text>
<path d="M22.05 338.35 H22.95" stroke="#a8a8a8" stroke-width="0.45" stroke-linecap="butt"/>
<path d="M21.30 342.66 H23.70" stroke="#a8a8a8" stroke-width="0.4" stroke-linecap="butt"/>
<path d="M22.05 346.97 H22.95" stroke="#a8a8a8" stroke-width="0.45" stroke-linecap="butt"/>
<text transform="translate(23.80 351.28) rotate(-90)" font-size="3.7" text-anchor="middle" fill="#a8a8a8" stroke="none" font-family="Liberation Sans, sans-serif">12</text>
<path d="M22.05 355.59 H22.95" stroke="#a8a8a8" stroke-width="0.45" stroke-linecap="butt"/>
<path d="M21.30 359.90 H23.70" stroke="#a8a8a8" stroke-width="0.4" stroke-linecap="butt"/>
<path d="M22.05 364.21 H22.95" stroke="#a8a8a8" stroke-width="0.45" stroke-linecap="butt"/>
<text transform="translate(23.80 368.52) rotate(-90)" font-size="3.7" text-anchor="middle" fill="#a8a8a8" stroke="none" font-family="Liberation Sans, sans-serif">13</text>
<path d="M22.05 372.83 H22.95" stroke="#a8a8a8" stroke-width="0.45" stroke-linecap="butt"/>
<path d="M21.30 377.14 H23.70" stroke="#a8a8a8" stroke-width="0.4" stroke-linecap="butt"/>
<path d="M22.05 381.45 H22.95" stroke="#a8a8a8" stroke-width="0.45" stroke-linecap="butt"/>
<text transform="translate(23.80 385.76) rotate(-90)" font-size="3.7" text-anchor="middle" fill="#a8a8a8" stroke="none" font-family="Liberation Sans, sans-serif">14</text>
<path d="M22.05 390.07 H22.95" stroke="#a8a8a8" stroke-width="0.45" stroke-linecap="butt"/>
<path d="M21.30 394.38 H23.70" stroke="#a8a8a8" stroke-width="0.4" stroke-linecap="butt"/>
<path d="M22.05 398.69 H22.95" stroke="#a8a8a8" stroke-width="0.45" stroke-linecap="butt"/>
<text transform="translate(23.80 403.00) rotate(-90)" font-size="3.7" text-anchor="middle" fill="#a8a8a8" stroke="none" font-family="Liberation Sans, sans-serif">15</text>
<path d="M22.05 407.31 H22.95" stroke="#a8a8a8" stroke-width="0.45" stroke-linecap="butt"/>
<path d="M21.30 411.62 H23.70" stroke="#a8a8a8" stroke-width="0.4" stroke-linecap="butt"/>
<path d="M22.05 415.93 H22.95" stroke="#a8a8a8" stroke-width="0.45" stroke-linecap="butt"/>
<text transform="translate(23.80 420.24) rotate(-90)" font-size="3.7" text-anchor="middle" fill="#a8a8a8" stroke="none" font-family="Liberation Sans, sans-serif">16</text>
<path d="M22.05 424.55 H22.95" stroke="#a8a8a8" stroke-width="0.45" stroke-linecap="butt"/>
<path d="M21.30 428.86 H23.70" stroke="#a8a8a8" stroke-width="0.4" stroke-linecap="butt"/>
<path d="M22.05 433.17 H22.95" stroke="#a8a8a8" stroke-width="0.45" stroke-linecap="butt"/>
<text transform="translate(23.80 437.48) rotate(-90)" font-size="3.7" text-anchor="middle" fill="#a8a8a8" stroke="none" font-family="Liberation Sans, sans-serif">17</text>
<path d="M22.05 441.79 H22.95" stroke="#a8a8a8" stroke-width="0.45" stroke-linecap="butt"/>
<path d="M21.30 446.10 H23.70" stroke="#a8a8a8" stroke-width="0.4" stroke-linecap="butt"/>
<path d="M22.05 450.41 H22.95" stroke="#a8a8a8" stroke-width="0.45" stroke-linecap="butt"/>
<text transform="translate(23.80 454.72) rotate(-90)" font-size="3.7" text-anchor="middle" fill="#a8a8a8" stroke="none" font-family="Liberation Sans, sans-serif">18</text>
<path d="M22.05 459.03 H22.95" stroke="#a8a8a8" stroke-width="0.45" stroke-linecap="butt"/>
<path d="M21.30 463.34 H23.70" stroke="#a8a8a8" stroke-width="0.4" stroke-linecap="butt"/>
<path d="M22.05 467.65 H22.95" stroke="#a8a8a8" stroke-width="0.45" stroke-linecap="butt"/>
<text transform="translate(23.80 471.96) rotate(-90)" font-size="3.7" text-anchor="middle" fill="#a8a8a8" stroke="none" font-family="Liberation Sans, sans-serif">19</text>
<rect x="19.3" y="82.8" width="6.1" height="6.4" fill="#222" stroke="#484848" stroke-width="0.4"/><path d="M21.3 84.6 V87.5 H24" stroke="#f0f0f0" stroke-width="0.8" stroke-linecap="butt" stroke-linejoin="miter"/>
<g stroke="none"><rect x="847.3" y="80.3" width="6.4" height="6.5" rx="0.6" fill="#414141" stroke="#4c4c4c" stroke-width="0.3"/><path d="M849 84.4 L850.5 82.7 L852 84.4 Z" fill="#f0f0f0"/><rect x="847.3" y="87.1" width="6.4" height="276.4" rx="0.8" fill="#414141"/><path d="M849.4 222.6 H851.7 M849.4 223.9 H851.7 M849.4 225.2 H851.7 M849.4 226.5 H851.7 M849.4 227.8 H851.7" stroke="#b4b4b4" stroke-width="0.7" stroke-linecap="butt"/><rect x="847.3" y="468.8" width="6.4" height="6.2" rx="0.6" fill="#414141" stroke="#4c4c4c" stroke-width="0.3"/><path d="M849 471 L850.5 472.7 L852 471 Z" fill="#f0f0f0"/></g>
</svg>

<div id="tx">
<span class="t" style="left:146px;top:40.9px;font-size:45px;letter-spacing:1.24px;color:#f4f4f4;font-weight:bold;-webkit-text-stroke:0;transform:scaleY(1.08);">ONLYOFFICE</span>
<span class="t" style="left:632px;top:39.5px;font-size:49px;letter-spacing:-0.53px;color:#f4f4f4;transform:scaleY(1.08);-webkit-text-stroke:0.6px #f4f4f4;">Dokument1.pdf</span>
<span class="t" style="left:4160px;top:167.2px;font-size:60px;letter-spacing:0.01px;color:#f4f4f4;transform:scaleY(1.05);-webkit-text-stroke:0.5px #f4f4f4;">Dokument1.pdf</span>
<span class="t" style="left:92.5px;top:282.9px;font-size:58px;letter-spacing:-3.10px;color:#ffffff;transform:scaleY(0.98);-webkit-text-stroke:0.9px #ffffff;">Fil</span>
<span class="t" style="left:262.5px;top:282.9px;font-size:58px;letter-spacing:-3.45px;color:#ffffff;transform:scaleY(0.98);-webkit-text-stroke:0.9px #ffffff;">Hjem</span>
<span class="t" style="left:502.5px;top:282.9px;font-size:58px;letter-spacing:0.54px;color:#ffffff;transform:scaleY(0.98);-webkit-text-stroke:0.9px #ffffff;">Indsæt</span>
<span class="t" style="left:792.5px;top:282.9px;font-size:58px;letter-spacing:-1.78px;color:#ffffff;transform:scaleY(0.98);-webkit-text-stroke:0.9px #ffffff;">Draw</span>
<span class="t" style="left:1037.5px;top:282.9px;font-size:58px;letter-spacing:-0.83px;color:#ffffff;transform:scaleY(0.98);-webkit-text-stroke:0.9px #ffffff;">Layout</span>
<span class="t" style="left:1322.5px;top:282.9px;font-size:58px;letter-spacing:-1.88px;color:#ffffff;transform:scaleY(0.98);-webkit-text-stroke:0.9px #ffffff;">Referencer</span>
<span class="t" style="left:1707.5px;top:282.9px;font-size:58px;letter-spacing:-0.40px;color:#ffffff;transform:scaleY(0.98);-webkit-text-stroke:0.9px #ffffff;">Formularer</span>
<span class="t" style="left:2099.5px;top:282.9px;font-size:58px;letter-spacing:-0.86px;color:#ffffff;transform:scaleY(0.98);-webkit-text-stroke:0.9px #ffffff;">Samarbejde</span>
<span class="t" style="left:2518.5px;top:282.9px;font-size:58px;letter-spacing:-3.26px;color:#ffffff;transform:scaleY(0.98);-webkit-text-stroke:0.9px #ffffff;">Vis</span>
<span class="t" style="left:2702.5px;top:282.9px;font-size:58px;letter-spacing:0.31px;color:#ffffff;transform:scaleY(0.98);-webkit-text-stroke:0.9px #ffffff;">Tilføjelsesprogrammer</span>
<span class="t" style="left:3395.5px;top:282.9px;font-size:58px;letter-spacing:-9.80px;color:#ffffff;transform:scaleY(0.98);-webkit-text-stroke:0.9px #ffffff;">AI</span>
<span class="t" style="left:8047px;top:293.6px;font-size:56px;letter-spacing:-1.70px;color:#ffffff;transform:scaleY(1.02);-webkit-text-stroke:0.8px #ffffff;">Editing</span>
<span class="t" style="left:412.5px;top:595px;font-size:52px;letter-spacing:-1.27px;color:#f2f2f2;transform:scaleY(1.25);-webkit-text-stroke:0.8px #404040;">Blank</span>
<span class="t" style="left:432.5px;top:653px;font-size:52px;letter-spacing:-3.46px;color:#f2f2f2;transform:scaleY(1.25);-webkit-text-stroke:0.8px #404040;">side</span>
<span class="t" style="left:587.5px;top:595px;font-size:52px;letter-spacing:-0.19px;color:#f2f2f2;transform:scaleY(1.25);-webkit-text-stroke:0.8px #404040;">Sideskift</span>
<span class="t" style="left:892.5px;top:595px;font-size:52px;letter-spacing:-2.33px;color:#f2f2f2;transform:scaleY(1.25);-webkit-text-stroke:0.8px #404040;">Tabel</span>
<span class="t" style="left:1122.5px;top:595px;font-size:52px;letter-spacing:-0.18px;color:#f2f2f2;transform:scaleY(1.25);-webkit-text-stroke:0.8px #404040;">Billede</span>
<span class="t" style="left:1327.5px;top:595px;font-size:52px;letter-spacing:-0.44px;color:#f2f2f2;transform:scaleY(1.25);-webkit-text-stroke:0.8px #404040;">Form</span>
<span class="t" style="left:1497.5px;top:595px;font-size:52px;letter-spacing:0.70px;color:#f2f2f2;transform:scaleY(1.25);-webkit-text-stroke:0.8px #404040;">SmartArt</span>
<span class="t" style="left:1757.5px;top:595px;font-size:52px;letter-spacing:0.58px;color:#f2f2f2;transform:scaleY(1.25);-webkit-text-stroke:0.8px #404040;">Diagram</span>
<span class="t" style="left:2067.5px;top:595px;font-size:52px;letter-spacing:0.15px;color:#808080;transform:scaleY(1.25);-webkit-text-stroke:0.8px #404040;">Kommentar</span>
<span class="t" style="left:2392.5px;top:595px;font-size:52px;letter-spacing:1.03px;color:#f2f2f2;transform:scaleY(1.25);-webkit-text-stroke:0.8px #404040;">Hyperlink</span>
<span class="t" style="left:2722.5px;top:595px;font-size:52px;letter-spacing:1.38px;color:#f2f2f2;transform:scaleY(1.25);-webkit-text-stroke:0.8px #404040;">Sidehoved/sidefod</span>
<span class="t" style="left:3282.5px;top:595px;font-size:52px;letter-spacing:-0.78px;color:#f2f2f2;transform:scaleY(1.25);-webkit-text-stroke:0.8px #404040;">Tekstboks</span>
<span class="t" style="left:3562.5px;top:595px;font-size:52px;letter-spacing:-1.59px;color:#f2f2f2;transform:scaleY(1.25);-webkit-text-stroke:0.8px #404040;">Tekst</span>
<span class="t" style="left:3562.5px;top:653px;font-size:52px;letter-spacing:-0.34px;color:#f2f2f2;transform:scaleY(1.25);-webkit-text-stroke:0.8px #404040;">art</span>
<span class="t" style="left:3732.5px;top:595px;font-size:52px;letter-spacing:-1.90px;color:#808080;transform:scaleY(1.25);-webkit-text-stroke:0.8px #404040;">Unical</span>
<span class="t" style="left:3922.5px;top:595px;font-size:52px;letter-spacing:0.48px;color:#f2f2f2;transform:scaleY(1.25);-webkit-text-stroke:0.8px #404040;">Dato og</span>
<span class="t" style="left:3987.5px;top:653px;font-size:52px;letter-spacing:0.04px;color:#f2f2f2;transform:scaleY(1.25);-webkit-text-stroke:0.8px #404040;">tid</span>
<span class="t" style="left:4162.5px;top:595px;font-size:52px;letter-spacing:0.15px;color:#f2f2f2;transform:scaleY(1.25);-webkit-text-stroke:0.8px #404040;">Text from</span>
<span class="t" style="left:4207.5px;top:653px;font-size:52px;letter-spacing:-2.93px;color:#f2f2f2;transform:scaleY(1.25);-webkit-text-stroke:0.8px #404040;">File</span>
<span class="t" style="left:4432.5px;top:595px;font-size:52px;letter-spacing:-1.93px;color:#f2f2f2;transform:scaleY(1.25);-webkit-text-stroke:0.8px #404040;">Field</span>
<span class="t" style="left:4652.5px;top:595px;font-size:52px;letter-spacing:-1.36px;color:#f2f2f2;transform:scaleY(1.25);-webkit-text-stroke:0.8px #404040;">Formel</span>
<span class="t" style="left:4862.5px;top:595px;font-size:52px;letter-spacing:0.32px;color:#f2f2f2;transform:scaleY(1.25);-webkit-text-stroke:0.8px #404040;">Symbol</span>
<span class="t" style="left:5142.5px;top:595px;font-size:52px;letter-spacing:1.41px;color:#f2f2f2;transform:scaleY(1.25);-webkit-text-stroke:0.8px #404040;">Indholdsindstillinger</span>
<span class="t" style="left:47px;top:4806.1px;font-size:53px;letter-spacing:-0.74px;color:#ffffff;-webkit-text-stroke:0.8px #ffffff;">Side 1 af 1</span>
<span class="t" style="left:487px;top:4806.1px;font-size:53px;letter-spacing:0.66px;color:#ffffff;-webkit-text-stroke:0.8px #ffffff;">Word count</span>
<span class="t" style="left:6757px;top:4806.1px;font-size:53px;letter-spacing:-0.23px;color:#ffffff;-webkit-text-stroke:0.8px #ffffff;">Dansk – Danmark</span>
<span class="t" style="left:8242px;top:4806.1px;font-size:53px;letter-spacing:-0.59px;color:#ffffff;-webkit-text-stroke:0.8px #ffffff;">Zoom 100%</span>
</div>
</div>
</body></html>
